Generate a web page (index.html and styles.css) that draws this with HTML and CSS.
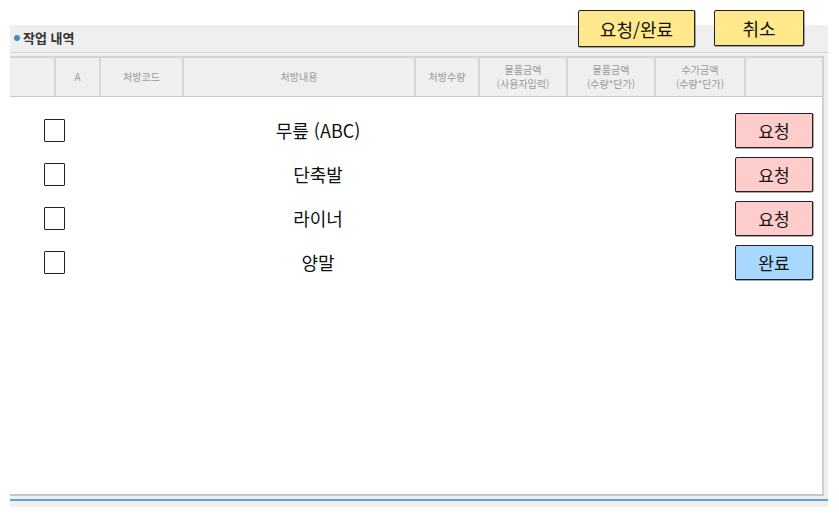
FILE: index.html
```html
<!DOCTYPE html>
<html lang="ko">
<head>
    <meta charset="UTF-8">
    <meta name="viewport" content="width=device-width, initial-scale=1.0">
    <title>작업 내역</title>
    <link rel="stylesheet" href="styles.css">
</head>
<body>
    <div class="panel">
        <div class="panel-title">
            <h2><span class="dot"></span>작업 내역</h2>
            <div class="top-actions">
                <button class="sketch-btn yellow wide">요청/완료</button>
                <button class="sketch-btn yellow">취소</button>
            </div>
        </div>

        <div class="grid-wrap">
            <div class="grid-head">
                <div class="col c1"></div>
                <div class="col c2">A</div>
                <div class="col c3">처방코드</div>
                <div class="col c4">처방내용</div>
                <div class="col c5">처방수량</div>
                <div class="col c6">물품금액<br>(사용자입력)</div>
                <div class="col c7">물품금액<br>(수량*단가)</div>
                <div class="col c8">수가금액<br>(수량*단가)</div>
                <div class="col c9"></div>
            </div>

            <div class="grid-body">
                <div class="row">
                    <span class="check"></span>
                    <span class="item">무릎 (ABC)</span>
                    <span></span>
                    <button class="sketch-btn pink">요청</button>
                </div>
                <div class="row">
                    <span class="check"></span>
                    <span class="item">단축발</span>
                    <span></span>
                    <button class="sketch-btn pink">요청</button>
                </div>
                <div class="row">
                    <span class="check"></span>
                    <span class="item">라이너</span>
                    <span></span>
                    <button class="sketch-btn pink">요청</button>
                </div>
                <div class="row">
                    <span class="check"></span>
                    <span class="item">양말</span>
                    <span></span>
                    <button class="sketch-btn blue">완료</button>
                </div>
            </div>
        </div>

        <div class="panel-foot"></div>
    </div>
</body>
</html>
```

FILE: styles.css
```css
body {
    margin: 0;
    font-family: 'Noto Sans CJK KR', 'Noto Sans', sans-serif;
    background-color: #fff;
    color: #111;
}
.panel {
    margin: 25px 0 0 10px;
    width: 818px;
    background-color: #efefef;
}
.panel-title {
    height: 27px;
    display: flex;
    justify-content: space-between;
    align-items: flex-start;
    border-bottom: 1px solid #d2d2d2;
}
.panel-title h2 {
    margin: 0;
    padding-left: 4px;
    font-size: 13px;
    font-weight: bold;
    line-height: 25px;
    color: #333;
    display: flex;
    align-items: center;
}
.dot {
    width: 6px;
    height: 6px;
    border-radius: 50%;
    background-color: #4a89c9;
    margin-right: 3px;
}
.top-actions {
    display: flex;
    gap: 19px;
    margin-top: -15px;
    margin-right: 24px;
}
.sketch-btn {
    font-family: 'Noto Sans CJK KR', sans-serif;
    font-size: 17px;
    color: #111;
    border: 1.5px solid #222;
    border-radius: 2px 1px 2px 1px;
    padding: 0;
    width: 78px;
    height: 35px;
    cursor: pointer;
    box-shadow: 0.5px 0.5px 0 #555;
}
.sketch-btn.yellow {
    background-color: #ffe98c;
    width: 90px;
    height: 36px;
    font-size: 18px;
}
.sketch-btn.wide {
    width: 117px;
    height: 37px;
}
.sketch-btn.pink {
    background-color: #ffcccc;
}
.sketch-btn.blue {
    background-color: #a8d8ff;
}
.grid-wrap {
    margin-top: 3px;
    width: 812px;
    border-right: 2px solid #cfcfcf;
    border-bottom: 2px solid #c6c6c6;
}
.grid-head {
    display: grid;
    grid-template-columns: 44px 45px 83px 232px 64px 88px 88px 90px 1fr;
    border-top: 2px solid #d4d4d4;
    border-bottom: 1px solid #c8c8c8;
    height: 38px;
}
.col {
    display: flex;
    align-items: center;
    justify-content: center;
    text-align: center;
    font-size: 10px;
    line-height: 14px;
    color: #9a9a9a;
    border-left: 2px solid #d6d6d6;
}
.col.c1 {
    border-left: none;
}
.grid-body {
    background-color: #fff;
    height: 386px;
    padding-top: 11px;
}
.row {
    display: grid;
    grid-template-columns: 22px 504px 1fr 78px;
    align-items: center;
    height: 44px;
    padding: 0 9px 0 34px;
}
.check {
    width: 19px;
    height: 21px;
    border: 1.5px solid #222;
    border-radius: 1px;
}
.item {
    text-align: center;
    font-size: 18px;
}
.panel-foot {
    height: 6px;
    margin-top: 3px;
    border-top: 2px solid #5fa5d2;
}
```
